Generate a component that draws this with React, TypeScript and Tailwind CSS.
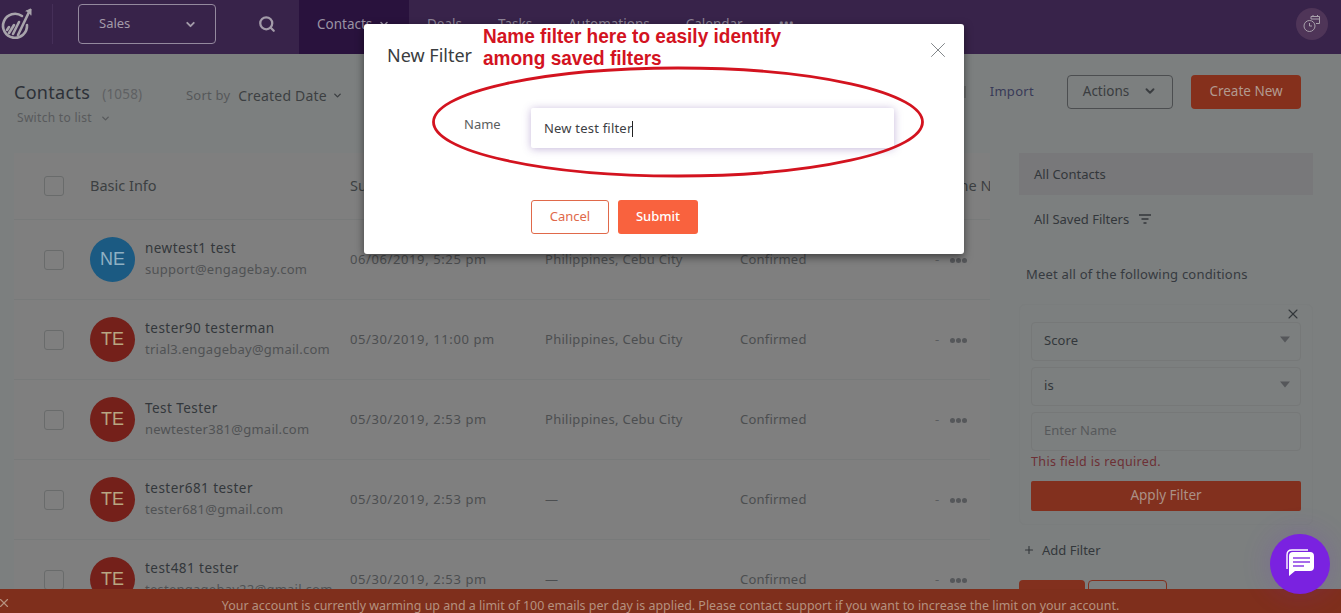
import { ChevronDown, Search, X, Plus } from 'lucide-react';

const contacts = [
  { initials: 'NE', name: 'newtest1 test', email: 'support@engagebay.com', date: '06/06/2019, 5:25 pm', place: 'Philippines, Cebu City', color: 'bg-[#1b5a82]' },
  { initials: 'TE', name: 'tester90 testerman', email: 'trial3.engagebay@gmail.com', date: '05/30/2019, 11:00 pm', place: 'Philippines, Cebu City', color: 'bg-[#74201a]' },
  { initials: 'TE', name: 'Test Tester', email: 'newtester381@gmail.com', date: '05/30/2019, 2:53 pm', place: 'Philippines, Cebu City', color: 'bg-[#74201a]' },
  { initials: 'TE', name: 'tester681 tester', email: 'tester681@gmail.com', date: '05/30/2019, 2:53 pm', place: '—', color: 'bg-[#74201a]' },
  { initials: 'TE', name: 'test481 tester', email: 'testengagebay22@gmail.com', date: '05/30/2019, 2:53 pm', place: '—', color: 'bg-[#74201a]' },
];

function Logo() {
  return (
    <svg width="32" height="32" viewBox="0 0 32 32" fill="none" stroke="#a8a4ab" strokeWidth="2.6" strokeLinecap="round">
      <path d="M22 8 A12 12 0 1 0 27 17" />
      <path d="M9 19 L7 22 M14 17 L9 25 M19 14 L13 26 M30 2 L18 27" />
      <path d="M26 3 L31 1 L31 7" fill="#a8a4ab" strokeWidth="1" />
    </svg>
  );
}

function TriangleSelect({ label }: { label: string }) {
  return (
    <div className="h-[39px] rounded border border-[#767878] flex items-center justify-between pl-[12px] pr-[10px] text-[13px] tracking-[0.1px] text-[#33373b]">
      <span>{label}</span>
      <svg width="10" height="7" viewBox="0 0 10 7" className="mb-[4px]">
        <path d="M0 0.5 H10 L5 6.5 Z" fill="#55575a" />
      </svg>
    </div>
  );
}

function Row({ c }: { c: (typeof contacts)[number] }) {
  return (
    <div className="h-[80px] shrink-0 flex items-center border-b border-[#787a7a] text-[13px] text-[#4c4e50]">
      <div className="w-[30px] ml-[30px] shrink-0">
        <div className="w-[20px] h-[20px] rounded-[3px] border border-[#696b6b]" />
      </div>
      <div className={`w-[45px] h-[45px] ml-[16px] shrink-0 rounded-full flex items-center justify-center text-[18px] ${c.color} ${c.initials === 'NE' ? 'text-[#8fb0c2]' : 'text-[#b8a682]'}`} style={{ fontFamily: '"Liberation Sans", sans-serif' }}>
        {c.initials}
      </div>
      <div className="w-[205px] ml-[10px] shrink-0 whitespace-nowrap -mt-[2px]">
        <div className="text-[13.5px] text-[#33373b] tracking-[0.45px] leading-[20px]">{c.name}</div>
        <div className="text-[#505254] tracking-[0.25px] leading-[22px]">{c.email}</div>
      </div>
      <div className="w-[195px] shrink-0 tracking-[0.6px]">{c.date}</div>
      <div className="w-[195px] shrink-0 tracking-[0.28px]">{c.place}</div>
      <div className="w-[195px] shrink-0 tracking-[0.2px]">Confirmed</div>
      <div className="text-[#5a5c5e]">-</div>
      <div className="ml-[11px] mt-[2px] flex gap-[1.5px]">
        <span className="w-[4.5px] h-[4.5px] rounded-full bg-[#55575a]" />
        <span className="w-[4.5px] h-[4.5px] rounded-full bg-[#55575a]" />
        <span className="w-[4.5px] h-[4.5px] rounded-full bg-[#55575a]" />
      </div>
    </div>
  );
}

export default function App() {
  return (
    <div className="relative w-[1341px] h-[613px] overflow-hidden bg-[#7c7f7f] flex flex-col" style={{ fontFamily: '"Noto Sans", sans-serif' }}>
      {/* Top bar */}
      <header className="h-[54px] shrink-0 bg-[#38234a] flex items-center pb-[6px] text-[13.5px] text-[#8d8496]">
        <div className="w-[53px] h-[40px] border-r border-[#452f58] flex items-center shrink-0">
          <Logo />
        </div>
        <div className="ml-[25px] w-[138px] h-[40px] rounded border border-[#94899e] flex items-center justify-between pl-[20px] pr-[18px] text-[13px] text-[#a39ba9] shrink-0">
          <span>Sales</span>
          <ChevronDown size={13} strokeWidth={3.5} />
        </div>
        <Search size={18} strokeWidth={3} className="ml-[42px] text-[#a39ba9] shrink-0" />
        <div className="ml-[23px] w-[110px] h-[54px] -mb-[6px] pb-[6px] bg-[#29123d] flex items-center pl-[18px] gap-[6px] text-[#9a92a3] shrink-0">
          <span>Contacts</span>
          <ChevronDown size={12} strokeWidth={3} />
        </div>
        <nav className="flex items-center ml-[18px] gap-[36px]">
          <span>Deals</span>
          <span>Tasks</span>
          <span>Automations</span>
          <span>Calendar</span>
          <span>•••</span>
        </nav>
        <div className="ml-auto mr-[13px] w-[32px] h-[32px] rounded-full bg-[#4f3558] flex items-center justify-center shrink-0">
          <svg width="20" height="20" viewBox="0 0 20 20" fill="none" stroke="#a8a1ab" strokeWidth="1">
            <circle cx="7.5" cy="12" r="5.5" />
            <path d="M7.5 9 V12 H10" />
            <path d="M9 5 V2.5 H17.5 V9.5 H14 M11 1 V3 M15.5 1 V3 M9 5 H17.5" />
          </svg>
        </div>
      </header>

      {/* Title row */}
      <div className="h-[99px] shrink-0 flex items-start">
        <div className="ml-[14px] mt-[25px] w-[160px] shrink-0">
          <div className="flex items-baseline gap-[12px]">
            <span className="text-[18px] leading-[26px] tracking-[0.3px] text-[#2d3138]">Contacts</span>
            <span className="text-[13.5px] tracking-[0.2px] text-[#5f6163]">(1058)</span>
          </div>
          <div className="ml-[3px] mt-[4px] flex items-center gap-[8px] text-[12px] text-[#585a5c] tracking-[0.3px]">
            <span>Switch to list</span>
            <ChevronDown size={11} strokeWidth={3} />
          </div>
        </div>
        <div className="ml-[12px] mt-[31px] flex items-center shrink-0">
          <span className="text-[13px] tracking-[0.2px] text-[#56585a]">Sort by</span>
          <span className="ml-[8px] text-[14px] tracking-[0.2px] text-[#3c3f42]">Created Date</span>
          <ChevronDown size={11} strokeWidth={3} className="ml-[5px] text-[#3c3f42]" />
        </div>
        <div className="ml-auto mt-[21px] mr-[40px] flex items-center shrink-0">
          <span className="w-[2px] h-[12px] mr-[24px] bg-[#6a6c6c]" />
          <span className="text-[13px] text-[#383a58] tracking-[0.3px]">Import</span>
          <div className="ml-[33px] w-[106px] h-[34px] pb-[2px] rounded border border-[#4c4e50] flex items-center justify-center gap-[14px] text-[13.5px] text-[#3a3d40]">
            <span>Actions</span>
            <ChevronDown size={14} strokeWidth={3.2} />
          </div>
          <div className="ml-[18px] w-[110px] h-[34px] pb-[2px] rounded bg-[#85301c] flex items-center justify-center text-[13.5px] text-[#b29a90]">
            Create New
          </div>
        </div>
      </div>

      {/* Body */}
      <div className="flex-1 min-h-0 flex items-start">
        <section className="ml-[14px] w-[976px] h-full shrink-0 bg-[#7f7f7f] overflow-hidden flex flex-col">
          <div className="h-[67px] shrink-0 flex items-center border-b border-[#787a7a] text-[14.5px] text-[#3c3f42]">
            <div className="w-[30px] ml-[30px] shrink-0">
              <div className="w-[20px] h-[20px] rounded-[3px] border border-[#696b6b]" />
            </div>
            <div className="ml-[16px] w-[260px] shrink-0">Basic Info</div>
            <div className="w-[195px] shrink-0">Subscribed On</div>
            <div className="w-[195px] shrink-0">City</div>
            <div className="w-[195px] shrink-0">Status</div>
            <div className="ml-[-2px] whitespace-nowrap">Phone Number</div>
          </div>
          {contacts.map((c) => (
            <Row key={c.email} c={c} />
          ))}
        </section>

        <aside className="ml-[29px] w-[294px] shrink-0">
          <div className="h-[42px] pt-[1px] bg-[#78787a] flex items-center pl-[15px] text-[13px] text-[#33373b]">All Contacts</div>
          <div className="mt-[15px] pl-[15px] flex items-center gap-[9px] text-[13px] text-[#33373b]">
            <span>All Saved Filters</span>
            <svg width="14" height="12" viewBox="0 0 14 12" stroke="#33373b" strokeWidth="1.4" className="mb-[2px]">
              <path d="M1 2 H13 M3.5 6 H10.5 M5.5 10 H8.5" />
            </svg>
          </div>
          <p className="mt-[35px] ml-[7px] text-[13px] text-[#363a40] tracking-[0.2px] leading-[18px]">Meet all of the following conditions</p>
          <div className="relative mt-[21px] h-[221px] rounded-md border border-[#7a7d7d] px-[11px] pt-[17px]">
            <X size={16} strokeWidth={1.6} className="absolute right-[11px] top-[1px] text-[#33373b]" />
            <div className="flex flex-col gap-[6px]">
              <TriangleSelect label="Score" />
              <TriangleSelect label="is" />
              <div className="h-[39px] rounded border border-[#767878] flex items-center pl-[12px] text-[13px] text-[#57595b]">Enter Name</div>
            </div>
            <div className="mt-[2px] text-[12.5px] leading-[18px] text-[#6d3035] tracking-[0.35px]">This field is required.</div>
            <div className="mt-[10px] h-[30px] rounded-[2px] bg-[#82301e] flex items-center justify-center text-[13.5px] text-[#ab9186]">Apply Filter</div>
          </div>
          <div className="mt-[16px] ml-[4px] flex items-center gap-[7px] text-[13px] text-[#33373b]">
            <Plus size={12} strokeWidth={2.2} />
            <span>Add Filter</span>
          </div>
          <div className="mt-[20px] flex gap-[3px]">
            <div className="w-[66px] h-[30px] rounded bg-[#82301e]" />
            <div className="w-[79px] h-[30px] rounded border border-[#82301e]" />
          </div>
        </aside>
      </div>

      {/* Warm-up banner */}
      <div className="absolute left-0 right-0 bottom-0 h-[24px] pt-[10px] bg-[#7f2f1c] flex items-center justify-center text-[12.45px] leading-none text-[#b5917f]">
        <X size={14} className="absolute left-[-3px] top-[7px] text-[#b5917f]" />
        <span>Your account is currently warming up and a limit of 100 emails per day is applied. Please contact support if you want to increase the limit on your account.</span>
      </div>

      {/* Chat launcher */}
      <div className="absolute left-[1270px] top-[534px] w-[60px] h-[60px] rounded-full bg-[#7a22e0] flex items-center justify-center shadow-[0_0_30px_rgba(122,34,224,0.2)]">
        <svg width="32" height="30" viewBox="0 0 32 30" fill="none">
          <path d="M3 20 V6 Q3 1 8 1 H24" stroke="#fff" strokeWidth="1.4" />
          <path d="M9 3 H26 Q30 3 30 7 V18 Q30 22 26 22 H11 L5 27 V7 Q5 3 9 3 Z" fill="#fff" />
          <path d="M9 9 H26 M9 13 H26 M9 17 H20" stroke="#8a3de4" strokeWidth="1.4" />
        </svg>
      </div>

      {/* New Filter dialog */}
      <div className="absolute left-[364px] top-[24px] w-[600px] h-[230px] bg-white rounded-[3px] shadow-[0_3px_9px_rgba(0,0,0,0.5)]">
        <div className="flex items-start justify-between pl-[23px] pr-[13px] pt-[19px]">
          <h2 className="text-[18px] leading-[24px] text-[#3a3d40]">New Filter</h2>
          <X size={26} strokeWidth={0.9} className="text-[#7f8487] -mt-[6px]" />
        </div>
        <div className="mt-[41px] ml-[100px] flex items-start">
          <label className="w-[67px] mt-[7px] text-[13px] text-[#5b5e60]">Name</label>
          <div className="w-[363px] h-[40px] pt-[1px] rounded-[2px] bg-white shadow-[0_1px_8px_rgba(90,50,150,0.35)] flex items-center pl-[13px] text-[13px] tracking-[0.2px] text-[#3d4043]">
            <span>New test filter</span>
            <span className="w-px h-[16px] bg-[#222]" />
          </div>
        </div>
        <div className="mt-[52px] ml-[167px] flex gap-[9px]">
          <button className="w-[78px] h-[34px] rounded-[3px] border border-[#e0694a] text-[13px] text-[#e0694a]">Cancel</button>
          <button className="w-[80px] h-[34px] rounded-[3px] bg-[#f9623e] text-[13px] font-medium text-white">Submit</button>
        </div>
      </div>

      {/* Annotation drawn over the dialog */}
      <div className="absolute left-[483px] top-[25px] text-[21px] leading-[22px] font-bold text-[#d3131f] scale-x-[0.906] origin-left whitespace-nowrap" style={{ fontFamily: '"Liberation Sans", sans-serif' }}>
        Name filter here to easily identify<br />among saved filters
      </div>
      <svg className="absolute left-[428px] top-[62px]" width="500" height="120" viewBox="0 0 500 120" fill="none">
        <ellipse cx="250" cy="60" rx="244.5" ry="54" stroke="#d3131f" strokeWidth="2.8" />
      </svg>
    </div>
  );
}
